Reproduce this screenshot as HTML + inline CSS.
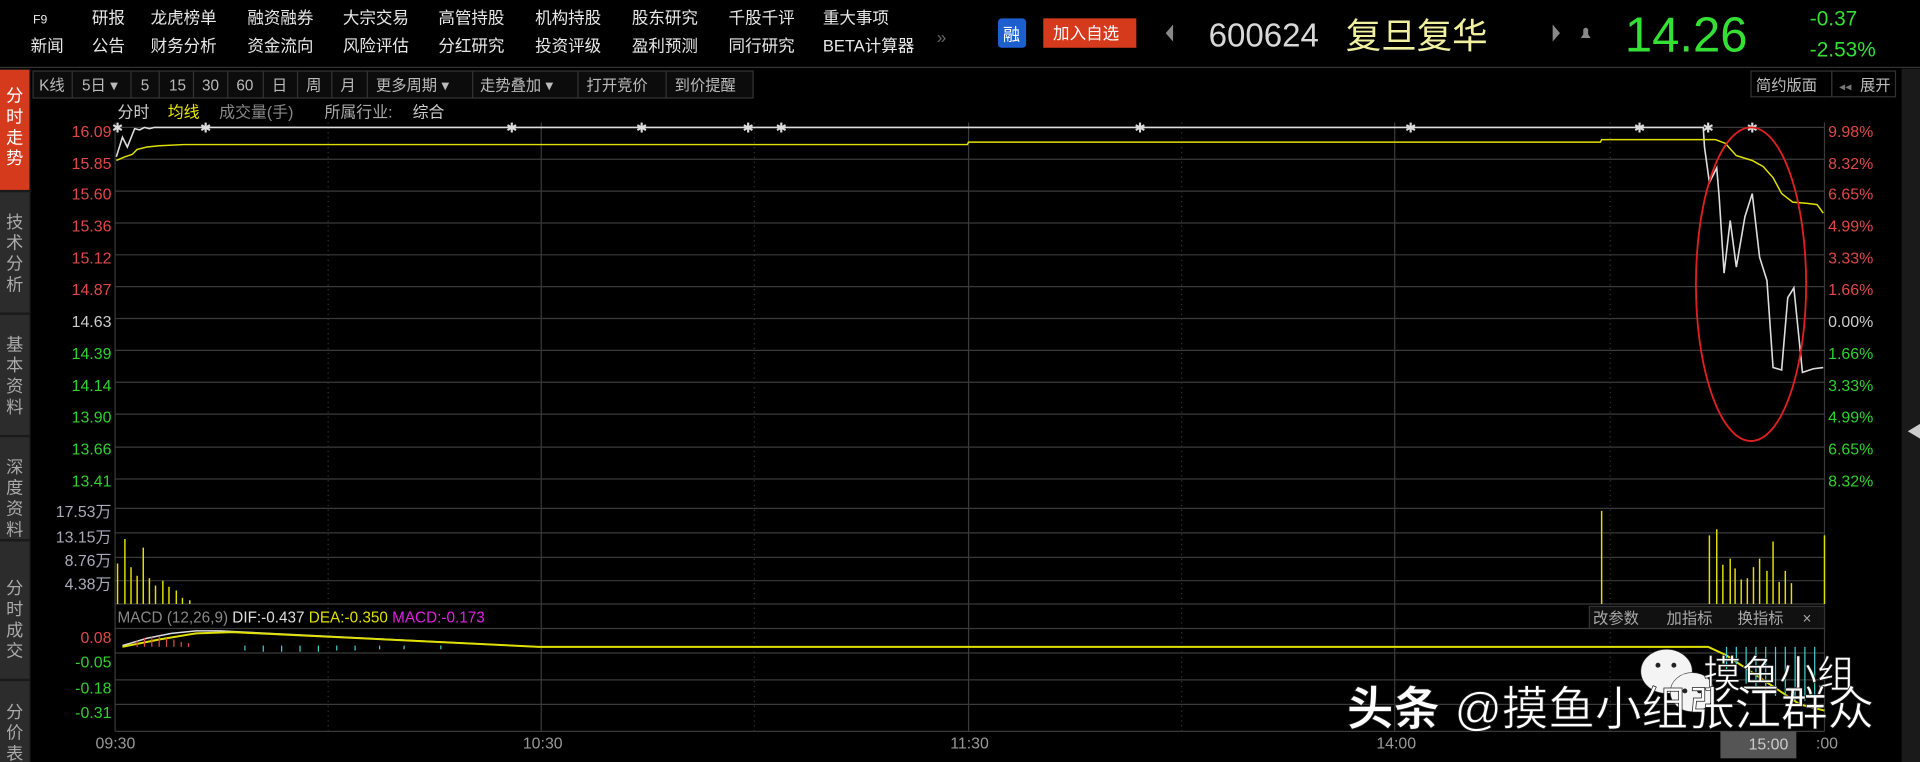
<!DOCTYPE html>
<html><head><meta charset="utf-8">
<style>
html,body{margin:0;padding:0;background:#000;width:1920px;height:762px;overflow:hidden}
svg{display:block}
text{font-family:"Liberation Sans","Noto Sans CJK SC",sans-serif}
</style></head><body>
<svg width="1920" height="762" viewBox="0 0 1568 622" preserveAspectRatio="none" xmlns="http://www.w3.org/2000/svg">
<rect width="1568" height="622" fill="#000"/>
<g font-size="13.5" fill="#e8e8e8">
<text x="27" y="19" font-size="10">F9</text>
<text x="75" y="19">研报</text><text x="123" y="19">龙虎榜单</text><text x="202" y="19">融资融券</text><text x="280" y="19">大宗交易</text><text x="358" y="19">高管持股</text><text x="437" y="19">机构持股</text><text x="516" y="19">股东研究</text><text x="595" y="19">千股千评</text><text x="672" y="19">重大事项</text>
<text x="25" y="42">新闻</text><text x="75" y="42">公告</text><text x="123" y="42">财务分析</text><text x="202" y="42">资金流向</text><text x="280" y="42">风险评估</text><text x="358" y="42">分红研究</text><text x="437" y="42">投资评级</text><text x="516" y="42">盈利预测</text><text x="595" y="42">同行研究</text><text x="672" y="42">BETA计算器</text>
</g>
<text x="765" y="35" fill="#666" font-size="14">»</text>
<rect x="815" y="15" width="23" height="24" rx="3" fill="#1e5fd0"/><text x="819" y="33" fill="#fff" font-size="14">融</text>
<rect x="852" y="15" width="76" height="24" fill="#d63a1c"/><text x="860" y="32" fill="#fff" font-size="13.5">加入自选</text>
<path d="M958 20 L952 27 L958 34Z" fill="#888"/>
<text x="987" y="38" fill="#d8d8d8" font-size="27">600624</text>
<text x="1099" y="39" fill="#f0f0a0" font-size="29">复旦复华</text>
<path d="M1268 20 L1274 27 L1268 34Z" fill="#888"/>
<path d="M1291 31 L1299 31 L1297 28 L1297 24 Q1295 21 1293 24 L1293 28Z" fill="#888"/>
<text x="1327" y="42" fill="#34e034" font-size="40">14.26</text>
<text x="1478" y="21" fill="#34e034" font-size="17">-0.37</text>
<text x="1478" y="46" fill="#34e034" font-size="17">-2.53%</text>
<line x1="0" y1="55" x2="1568" y2="55" stroke="#333"/>
<rect x="0" y="56" width="25" height="566" fill="#1a1a1a"/>
<rect x="0" y="57" width="24" height="98" fill="#d63a1c"/>
<rect x="0" y="157" width="24" height="98" fill="#2c2c2c"/>
<rect x="0" y="257" width="24" height="98" fill="#2c2c2c"/>
<rect x="0" y="357" width="24" height="83" fill="#2c2c2c"/>
<rect x="0" y="442" width="24" height="112" fill="#2c2c2c"/>
<rect x="0" y="556" width="24" height="66" fill="#2c2c2c"/>
<g font-size="14" text-anchor="middle">
<g fill="#fff"><text x="12" y="83">分</text><text x="12" y="100">时</text><text x="12" y="117">走</text><text x="12" y="134">势</text></g>
<g fill="#aaa"><text x="12" y="186">技</text><text x="12" y="203">术</text><text x="12" y="220">分</text><text x="12" y="237">析</text>
<text x="12" y="286">基</text><text x="12" y="303">本</text><text x="12" y="320">资</text><text x="12" y="337">料</text>
<text x="12" y="386">深</text><text x="12" y="403">度</text><text x="12" y="420">资</text><text x="12" y="437">料</text>
<text x="12" y="485">分</text><text x="12" y="502">时</text><text x="12" y="519">成</text><text x="12" y="536">交</text>
<text x="12" y="586">分</text><text x="12" y="603">价</text><text x="12" y="620">表</text></g>
</g>
<g stroke="#333" fill="#0c0c0c"><rect x="27" y="58" width="588" height="22"/></g>
<g fill="#bbb" font-size="12.5">
<text x="32" y="74">K线</text><text x="67" y="74">5日 ▾</text><text x="115" y="74">5</text><text x="138" y="74">15</text><text x="165" y="74">30</text><text x="193" y="74">60</text><text x="222" y="74">日</text><text x="250" y="74">周</text><text x="278" y="74">月</text><text x="307" y="74">更多周期 ▾</text><text x="392" y="74">走势叠加 ▾</text><text x="479" y="74">打开竞价</text><text x="551" y="74">到价提醒</text>
</g>
<g stroke="#333"><line x1="59" y1="58" x2="59" y2="80"/><line x1="107" y1="58" x2="107" y2="80"/><line x1="130" y1="58" x2="130" y2="80"/><line x1="158" y1="58" x2="158" y2="80"/><line x1="186" y1="58" x2="186" y2="80"/><line x1="215" y1="58" x2="215" y2="80"/><line x1="243" y1="58" x2="243" y2="80"/><line x1="271" y1="58" x2="271" y2="80"/><line x1="300" y1="58" x2="300" y2="80"/><line x1="386" y1="58" x2="386" y2="80"/><line x1="472" y1="58" x2="472" y2="80"/><line x1="544" y1="58" x2="544" y2="80"/></g>
<rect x="1430" y="58" width="66" height="21" fill="none" stroke="#333"/><rect x="1496" y="58" width="52" height="21" fill="none" stroke="#333"/>
<text x="1434" y="74" fill="#bbb" font-size="12.5">简约版面</text><text x="1502" y="74" fill="#777" font-size="10">◂◂</text><text x="1519" y="74" fill="#bbb" font-size="12.5">展开</text>
<g font-size="13"><text x="96" y="96" fill="#ccc">分时</text><text x="137" y="96" fill="#e8e800">均线</text><text x="179" y="96" fill="#888">成交量(手)</text><text x="265" y="96" fill="#aaa">所属行业:</text><text x="337" y="96" fill="#ccc">综合</text></g>
<g stroke="#3a3a3a" stroke-width="1">
<line x1="94" y1="104" x2="1490" y2="104"/><line x1="94" y1="130" x2="1490" y2="130"/><line x1="94" y1="156" x2="1490" y2="156"/><line x1="94" y1="182" x2="1490" y2="182"/><line x1="94" y1="208" x2="1490" y2="208"/><line x1="94" y1="234" x2="1490" y2="234"/><line x1="94" y1="260" x2="1490" y2="260"/><line x1="94" y1="286" x2="1490" y2="286"/><line x1="94" y1="312" x2="1490" y2="312"/><line x1="94" y1="338" x2="1490" y2="338"/><line x1="94" y1="365" x2="1490" y2="365"/><line x1="94" y1="391" x2="1490" y2="391"/>
<line x1="94" y1="415" x2="1490" y2="415"/><line x1="94" y1="435" x2="1490" y2="435"/><line x1="94" y1="455" x2="1490" y2="455"/><line x1="94" y1="474" x2="1490" y2="474"/><line x1="94" y1="493" x2="1490" y2="493"/>
<line x1="94" y1="513" x2="1490" y2="513"/><line x1="94" y1="533" x2="1490" y2="533"/><line x1="94" y1="555" x2="1490" y2="555"/><line x1="94" y1="575" x2="1490" y2="575"/><line x1="94" y1="597" x2="1490" y2="597"/>
<line x1="94" y1="100" x2="94" y2="597"/><line x1="442" y1="100" x2="442" y2="597"/><line x1="791" y1="100" x2="791" y2="597"/><line x1="1139" y1="100" x2="1139" y2="597"/><line x1="1490" y1="100" x2="1490" y2="597"/>
</g>
<g stroke="#333" stroke-dasharray="1,3"><line x1="268" y1="100" x2="268" y2="597"/><line x1="616" y1="100" x2="616" y2="597"/><line x1="965" y1="100" x2="965" y2="597"/><line x1="1315" y1="100" x2="1315" y2="597"/></g>
<g font-size="13" text-anchor="end">
<g fill="#e04848"><text x="91" y="112">16.09</text><text x="91" y="138">15.85</text><text x="91" y="163">15.60</text><text x="91" y="189">15.36</text><text x="91" y="215">15.12</text><text x="91" y="241">14.87</text></g>
<text x="91" y="267" fill="#ccc">14.63</text>
<g fill="#30d030"><text x="91" y="293">14.39</text><text x="91" y="319">14.14</text><text x="91" y="345">13.90</text><text x="91" y="371">13.66</text><text x="91" y="397">13.41</text></g>
<g fill="#aab"><text x="91" y="422">17.53万</text><text x="91" y="443">13.15万</text><text x="91" y="462">8.76万</text><text x="91" y="481">4.38万</text></g>
<text x="91" y="525" fill="#e04848">0.08</text><g fill="#30d030"><text x="91" y="545">-0.05</text><text x="91" y="566">-0.18</text><text x="91" y="586">-0.31</text></g>
</g>
<g font-size="13">
<g fill="#e04848"><text x="1493" y="112">9.98%</text><text x="1493" y="138">8.32%</text><text x="1493" y="163">6.65%</text><text x="1493" y="189">4.99%</text><text x="1493" y="215">3.33%</text><text x="1493" y="241">1.66%</text></g>
<text x="1493" y="267" fill="#ccc">0.00%</text>
<g fill="#30d030"><text x="1493" y="293">1.66%</text><text x="1493" y="319">3.33%</text><text x="1493" y="345">4.99%</text><text x="1493" y="371">6.65%</text><text x="1493" y="397">8.32%</text></g>
</g>
<rect x="1553" y="56" width="15" height="566" fill="#1a1a1a"/><path d="M1568 346 L1558 352 L1568 358Z" fill="#ccc"/>
<polyline fill="none" stroke="#ddd" stroke-width="1.3" points="95,128 100,112 104,120 110,105 114,106 118,104 122,105 126,104 1391,104 1392,120 1396,149 1402,137 1404,161 1408,223 1413,180 1418,218 1425,177 1431,158 1437,210 1443,229 1448,300 1455,302 1460,243 1465,235 1472,304 1481,301 1489,300"/>
<polyline fill="none" stroke="#e0e000" stroke-width="1.2" points="95,131 102,128 108,126 112,122 120,120 130,119 150,118 790,118 791,116 1307,116 1308,114 1391,114 1401,114 1409,117 1418,127 1431,131 1440,136 1448,145 1455,158 1464,165 1476,166 1484,167 1489,174"/>
<g fill="#ddd" font-size="11" text-anchor="middle"><text x="96" y="108">✱</text><text x="168" y="108">✱</text><text x="418" y="108">✱</text><text x="524" y="108">✱</text><text x="611" y="108">✱</text><text x="638" y="108">✱</text><text x="931" y="108">✱</text><text x="1152" y="108">✱</text><text x="1339" y="108">✱</text><text x="1395" y="108">✱</text><text x="1431" y="108">✱</text></g>
<g stroke="#e0e000" stroke-width="1.2">
<line x1="96" y1="493" x2="96" y2="460"/><line x1="102" y1="493" x2="102" y2="440"/><line x1="107" y1="493" x2="107" y2="463"/><line x1="112" y1="493" x2="112" y2="470"/><line x1="117" y1="493" x2="117" y2="447"/><line x1="122" y1="493" x2="122" y2="472"/><line x1="127" y1="493" x2="127" y2="478"/><line x1="133" y1="493" x2="133" y2="474"/><line x1="138" y1="493" x2="138" y2="479"/><line x1="144" y1="493" x2="144" y2="482"/><line x1="149" y1="493" x2="149" y2="488"/><line x1="155" y1="493" x2="155" y2="490"/>
<line x1="1308" y1="493" x2="1308" y2="417"/>
<line x1="1396" y1="493" x2="1396" y2="437"/><line x1="1402" y1="493" x2="1402" y2="432"/><line x1="1407" y1="493" x2="1407" y2="461"/><line x1="1413" y1="493" x2="1413" y2="456"/><line x1="1417" y1="493" x2="1417" y2="464"/><line x1="1422" y1="493" x2="1422" y2="473"/><line x1="1427" y1="493" x2="1427" y2="472"/><line x1="1432" y1="493" x2="1432" y2="463"/><line x1="1437" y1="493" x2="1437" y2="456"/><line x1="1443" y1="493" x2="1443" y2="466"/><line x1="1448" y1="493" x2="1448" y2="442"/><line x1="1453" y1="493" x2="1453" y2="475"/><line x1="1458" y1="493" x2="1458" y2="466"/><line x1="1463" y1="493" x2="1463" y2="476"/><line x1="1490" y1="493" x2="1490" y2="437"/>
</g>
<text x="96" y="508" font-size="12.5"><tspan fill="#888">MACD (12,26,9)</tspan><tspan fill="#ddd"> DIF:-0.437</tspan><tspan fill="#e0e000"> DEA:-0.350</tspan><tspan fill="#e020e0"> MACD:-0.173</tspan></text>
<rect x="1298" y="495" width="192" height="18" fill="#111" stroke="#333"/>
<text x="1301" y="509" fill="#aaa" font-size="12.5">改参数</text><text x="1361" y="509" fill="#aaa" font-size="12.5">加指标</text><text x="1419" y="509" fill="#aaa" font-size="12.5">换指标</text><text x="1472" y="509" fill="#aaa" font-size="12.5">×</text>
<polyline fill="none" stroke="#ddd" stroke-width="1.2" points="100,527 120,521 140,517 160,515 180,515 440,528"/>
<polyline fill="none" stroke="#e0e000" stroke-width="1.6" points="100,528 130,522 160,517 190,516 440,528 1395,528 1410,535 1440,555 1470,575 1490,580"/>
<g stroke="#e04848"><line x1="112" y1="528" x2="112" y2="523"/><line x1="118" y1="528" x2="118" y2="521"/><line x1="124" y1="528" x2="124" y2="520"/><line x1="130" y1="528" x2="130" y2="520"/><line x1="136" y1="528" x2="136" y2="521"/><line x1="142" y1="528" x2="142" y2="522"/><line x1="148" y1="528" x2="148" y2="524"/><line x1="154" y1="528" x2="154" y2="525"/></g>
<g stroke="#40d0d0"><line x1="200" y1="527" x2="200" y2="531"/><line x1="215" y1="527" x2="215" y2="532"/><line x1="230" y1="527" x2="230" y2="532"/><line x1="245" y1="527" x2="245" y2="532"/><line x1="260" y1="527" x2="260" y2="532"/><line x1="275" y1="527" x2="275" y2="531"/><line x1="290" y1="527" x2="290" y2="531"/><line x1="310" y1="527" x2="310" y2="530"/><line x1="330" y1="527" x2="330" y2="530"/><line x1="360" y1="527" x2="360" y2="530"/>
<line x1="1410" y1="528" x2="1410" y2="548"/><line x1="1418" y1="528" x2="1418" y2="552"/><line x1="1426" y1="528" x2="1426" y2="558"/><line x1="1434" y1="528" x2="1434" y2="562"/><line x1="1442" y1="528" x2="1442" y2="566"/><line x1="1450" y1="528" x2="1450" y2="568"/><line x1="1458" y1="528" x2="1458" y2="570"/><line x1="1466" y1="528" x2="1466" y2="572"/><line x1="1474" y1="528" x2="1474" y2="572"/><line x1="1482" y1="528" x2="1482" y2="570"/></g>
<g fill="#999" font-size="13"><text x="78" y="611">09:30</text><text x="427" y="611">10:30</text><text x="776" y="611">11:30</text><text x="1124" y="611">14:00</text><text x="1483" y="611">:00</text></g>
<rect x="1405" y="597" width="62" height="22" fill="#555"/><text x="1428" y="612" fill="#ccc" font-size="13">15:00</text>
<ellipse cx="1430" cy="232" rx="45" ry="128" fill="none" stroke="#e02020" stroke-width="1.5"/>
<g fill="#f4f4f4" stroke="#333" stroke-width="0.5">
<ellipse cx="1361" cy="548" rx="21" ry="18"/><ellipse cx="1382" cy="565" rx="18" ry="16"/>
</g>
<g fill="#222"><circle cx="1354" cy="543" r="2"/><circle cx="1367" cy="543" r="2"/><circle cx="1376" cy="564" r="2"/><circle cx="1388" cy="564" r="2"/></g>
<text x="1391" y="561" fill="#fff" font-size="31" stroke="#222" stroke-width="0.6">摸鱼小组</text>
<text x="1100" y="592" fill="#fff" font-size="38" font-weight="bold" stroke="#222" stroke-width="0.6">头条</text>
<text x="1188" y="592" fill="#fff" font-size="38" stroke="#222" stroke-width="0.6">@摸鱼小组张江群众</text>
</svg>
</body></html>
